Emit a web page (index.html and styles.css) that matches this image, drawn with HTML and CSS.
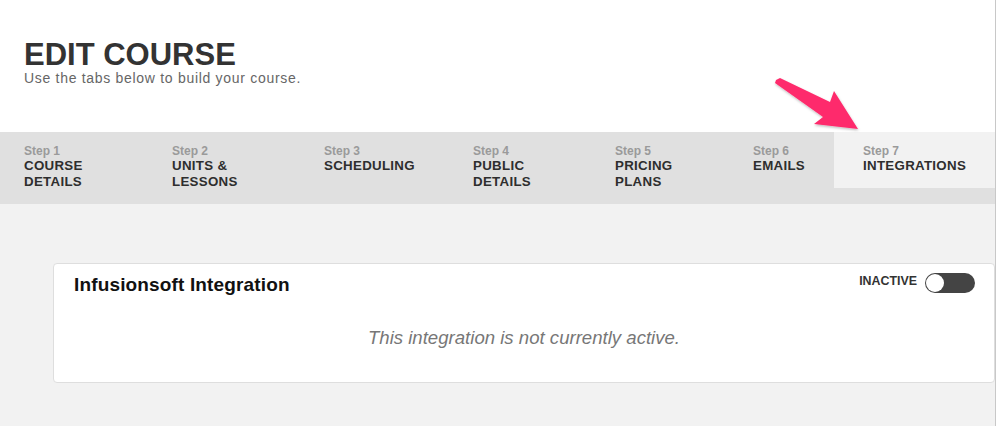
FILE: index.html
```html
<!DOCTYPE html>
<html>
<head>
<meta charset="utf-8">
<link rel="stylesheet" href="styles.css">
</head>
<body>
<div class="page">
  <header class="head">
    <h1 class="title">EDIT COURSE</h1>
    <p class="subtitle">Use the tabs below to build your course.</p>
  </header>
  <nav class="tabbar">
    <div class="tab"><span class="step">Step 1</span><span class="name">COURSE<br>DETAILS</span></div>
    <div class="tab"><span class="step">Step 2</span><span class="name">UNITS &amp;<br>LESSONS</span></div>
    <div class="tab"><span class="step">Step 3</span><span class="name">SCHEDULING</span></div>
    <div class="tab"><span class="step">Step 4</span><span class="name">PUBLIC<br>DETAILS</span></div>
    <div class="tab"><span class="step">Step 5</span><span class="name">PRICING<br>PLANS</span></div>
    <div class="tab"><span class="step">Step 6</span><span class="name">EMAILS</span></div>
    <div class="tab active"><span class="step">Step 7</span><span class="name">INTEGRATIONS</span></div>
  </nav>
  <main class="main">
    <section class="card">
      <div class="card-head">
        <h2 class="card-title">Infusionsoft Integration</h2>
        <div class="status">
          <span class="status-label">INACTIVE</span>
          <span class="toggle"><span class="knob"></span></span>
        </div>
      </div>
      <p class="message">This integration is not currently active.</p>
    </section>
  </main>
  <svg class="arrow" width="100" height="70" viewBox="0 0 100 70">
    <defs>
      <filter id="sh" x="-20%" y="-20%" width="140%" height="140%">
        <feDropShadow dx="0.5" dy="1.5" stdDeviation="1" flood-color="#000" flood-opacity="0.25"/>
      </filter>
    </defs>
    <polygon filter="url(#sh)" fill="#fe2c6c" points="5,19 9,17 59,41 63,30 87,68 43,63 52,56 4,22"/>
  </svg>
</div>
</body>
</html>
```
FILE: styles.css
```css
html, body {
  margin: 0;
  padding: 0;
  background: #ffffff;
}
body {
  font-family: "Liberation Sans", Arial, Helvetica, sans-serif;
  color: #333;
}
.page {
  position: relative;
  width: 995px;
  min-height: 426px;
  border-right: 1px solid #c8c8c8;
  display: flex;
  flex-direction: column;
}
.head {
  padding: 40px 0 0 24px;
  height: 132px;
  box-sizing: border-box;
}
.title {
  margin: 0;
  font-size: 31px;
  line-height: 30px;
  font-weight: bold;
  color: #333;
}
.subtitle {
  margin: 0;
  font-size: 14px;
  line-height: 16px;
  letter-spacing: 0.7px;
  color: #666;
}
.tabbar {
  display: grid;
  grid-template-columns: 148px 152px 149px 142px 138px 105px 1fr;
  background: #e0e0e0;
  padding-bottom: 16px;
}
.tab {
  height: 56px;
  box-sizing: border-box;
  padding: 13px 0 0 24px;
  display: flex;
  flex-direction: column;
}
.tab.active {
  background: #f2f2f2;
  padding-left: 29px;
}
.step {
  font-size: 12px;
  line-height: 13px;
  font-weight: bold;
  color: #9a9a9a;
}
.name {
  font-size: 13.3px;
  line-height: 16px;
  font-weight: bold;
  letter-spacing: 0.3px;
  color: #2e2e2e;
}
.main {
  flex: 1;
  background: #f2f2f2;
  padding: 59px 0 40px 53px;
}
.card {
  background: #fff;
  border: 1px solid #dedede;
  border-radius: 4px;
  height: 120px;
  box-sizing: border-box;
}
.card-head {
  display: flex;
  justify-content: space-between;
  align-items: flex-start;
  padding: 9px 19px 0 20px;
}
.card-title {
  margin: 0;
  font-size: 19px;
  line-height: 24px;
  font-weight: bold;
  letter-spacing: 0.15px;
  color: #111;
}
.status {
  display: flex;
  align-items: center;
  gap: 8px;
}
.status-label {
  font-size: 12.4px;
  font-weight: bold;
  color: #333;
  line-height: 14px;
  margin-top: -4px;
}
.toggle {
  width: 50px;
  height: 20px;
  border-radius: 10px;
  background: #444;
  position: relative;
}
.knob {
  position: absolute;
  left: 1px;
  top: 1px;
  width: 18px;
  height: 18px;
  border-radius: 50%;
  background: #fff;
}
.message {
  margin: 30px 0 0;
  text-align: center;
  font-style: italic;
  font-size: 18.6px;
  line-height: 22px;
  color: #777;
}
.arrow {
  position: absolute;
  left: 771px;
  top: 61px;
  overflow: visible;
}
```
